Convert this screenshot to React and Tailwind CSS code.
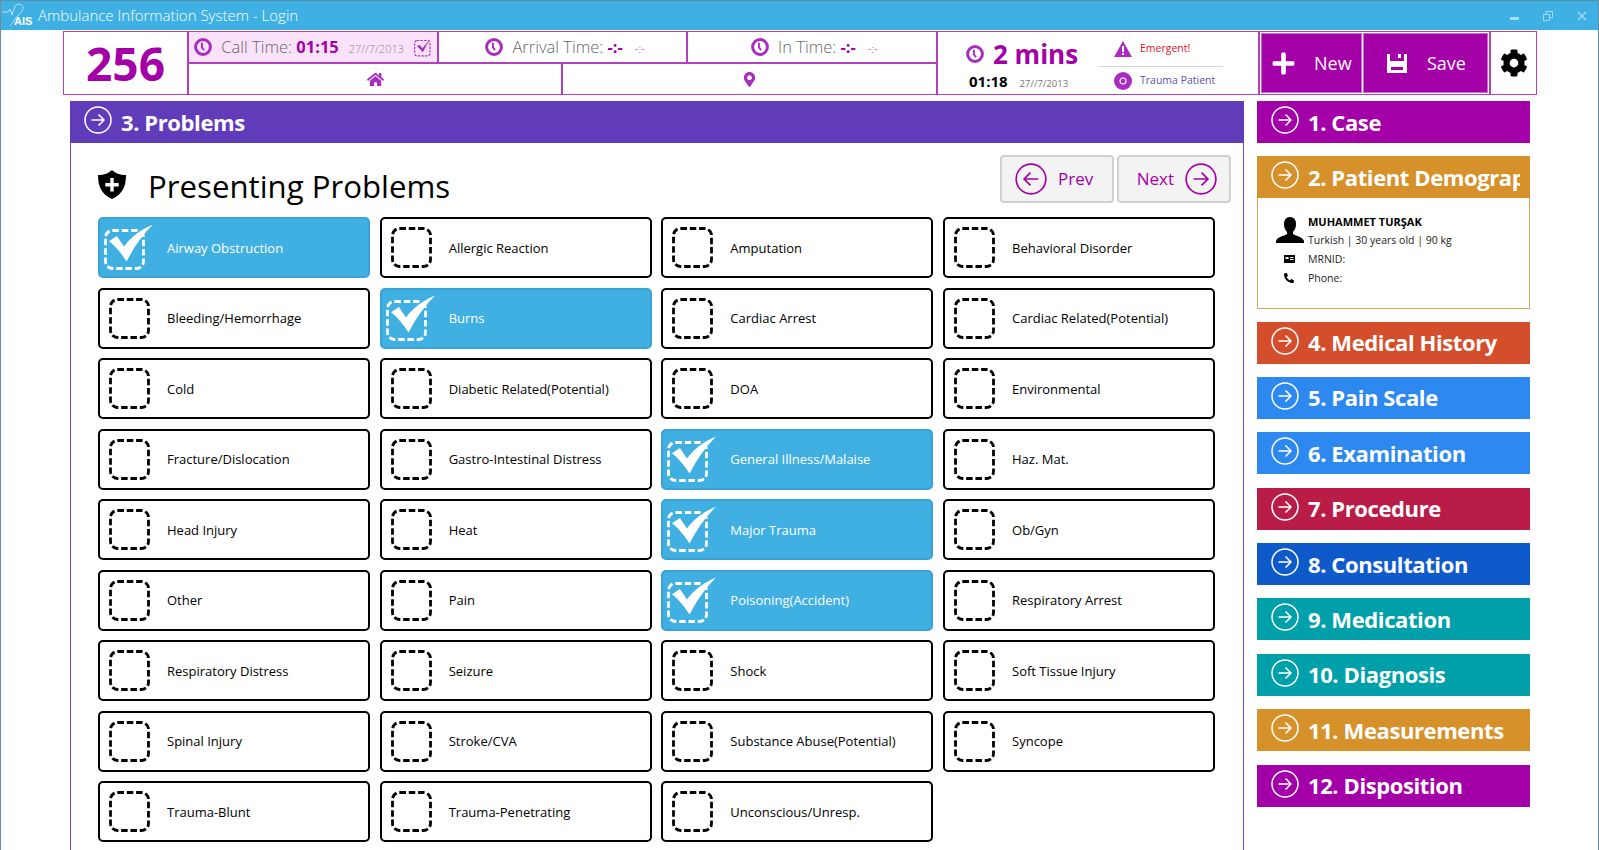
import { FaHome, FaMapMarkerAlt, FaCog, FaPlus, FaPhone } from "react-icons/fa";

const problems = [
    ["Airway Obstruction", true], ["Allergic Reaction"], ["Amputation"], ["Behavioral Disorder"],
    ["Bleeding/Hemorrhage"], ["Burns", true], ["Cardiac Arrest"], ["Cardiac Related(Potential)"],
    ["Cold"], ["Diabetic Related(Potential)"], ["DOA"], ["Environmental"],
    ["Fracture/Dislocation"], ["Gastro-Intestinal Distress"], ["General Illness/Malaise", true], ["Haz. Mat."],
    ["Head Injury"], ["Heat"], ["Major Trauma", true], ["Ob/Gyn"],
    ["Other"], ["Pain"], ["Poisoning(Accident)", true], ["Respiratory Arrest"],
    ["Respiratory Distress"], ["Seizure"], ["Shock"], ["Soft Tissue Injury"],
    ["Spinal Injury"], ["Stroke/CVA"], ["Substance Abuse(Potential)"], ["Syncope"],
    ["Trauma-Blunt"], ["Trauma-Penetrating"], ["Unconscious/Unresp."],
];

const sections = [
    { label: "4. Medical History", color: "bg-[#d54e2b]" },
    { label: "5. Pain Scale", color: "bg-[#2d89ef]" },
    { label: "6. Examination", color: "bg-[#2d89ef]" },
    { label: "7. Procedure", color: "bg-[#b91d47]" },
    { label: "8. Consultation", color: "bg-[#0f5acb]" },
    { label: "9. Medication", color: "bg-[#00a0ab]" },
    { label: "10. Diagnosis", color: "bg-[#00a0ab]" },
    { label: "11. Measurements", color: "bg-[#d6912b]" },
    { label: "12. Disposition", color: "bg-[#a300a8]" },
];

function ArrowCircle({ size = 28, dir = "right", width = 1.5 }) {
    return (
        <svg width={size} height={size} viewBox="0 0 28 28" fill="none" stroke="currentColor" strokeWidth={width} className="shrink-0">
            <circle cx="14" cy="14" r="13" />
            {dir === "right"
                ? <path d="M7.5 14h12.5M14.5 8.5 20 14l-5.500 5.500" />
                : <path d="M20.500 14H8M13.500 8.500 8 14l5.500 5.500" />}
        </svg>
    );
}

function Clock({ size = 18 }) {
    return (
        <svg width={size} height={size} viewBox="0 0 17 17" fill="none" stroke="#a92cc0" className="shrink-0">
            <circle cx="8.500" cy="8.500" r="7" strokeWidth="2.800" />
            <path d="M7.500 4.500v4.500l2 2.500" strokeWidth="1.800" />
        </svg>
    );
}

function CheckBox({ checked }) {
    const color = checked ? "#ffffff" : "#000000";
    return (
        <div className={`relative shrink-0 w-[41px] h-[41px] ${checked ? "-ml-[5px] mr-[22px] mt-[4px]" : "mr-[17px]"}`}>
            <svg width="41" height="41" viewBox="0 0 41 41" fill="none">
                <rect x="1.500" y="1.500" width="38" height="38" rx="7" stroke={color} strokeWidth="2.800" strokeDasharray="6.500 2.800" />
            </svg>
            {checked && (
                <svg width="44" height="38" viewBox="0 0 50 42" className="absolute -top-[5px] left-[5px]">
                    <path d="M0 19 9 13 17 25C25 14 36 6 50 0 38 12 28 26 20 42 14 33 8 25 0 19Z" fill="#ffffff" />
                </svg>
            )}
        </div>
    );
}

function ProblemCell({ label, checked }) {
    return (
        <div className={`h-[61px] rounded-[5px] border-2 flex items-center pl-[9px] text-[13px] ${checked ? "bg-[#40afe2] border-[#3aa3d6] text-white" : "bg-white border-black text-black"}`}>
            <CheckBox checked={checked} />
            <span className="pt-[2px]">{label}</span>
        </div>
    );
}

function SectionBar({ label, color }) {
    return (
        <div className={`h-[42px] flex items-center text-white pl-[14px] gap-[9px] pr-[10px] ${color}`}>
            <span className="-mt-[4px]"><ArrowCircle /></span>
            <span className="flex-1 min-w-0 overflow-hidden text-[22px] tracking-[-0.4px] font-bold whitespace-nowrap">{label}</span>
        </div>
    );
}

function TimeCell({ label, time, date, bg = "", w, check }) {
    return (
        <div className={`flex items-center justify-center gap-[9px] h-full ${w} ${bg} ${check ? "pl-[2px]" : "pl-[5px]"}`}>
            <Clock />
            <span className="text-[16.500px] font-light text-[#666666] whitespace-nowrap">
                {label} <b className="font-bold text-[#a300a8] text-[16.500px]">{time}</b>
                <span className={`text-[11px] ${check ? "ml-[10px] text-[#888888]" : "ml-[12px] text-[#a300a8]"}`}>{date}</span>
            </span>
            {check && (
                <svg width="21" height="20" viewBox="0 0 17 17" fill="none">
                    <rect x="1" y="3" width="13" height="13" rx="2" stroke="#a92cc0" strokeWidth="1" strokeDasharray="2 1" />
                    <path d="M3 8l2-1.500 2.500 3L15 1c-3 4-5 8-7 12-1.500-2-3-3.500-5-5Z" fill="#a92cc0" />
                </svg>
            )}
        </div>
    );
}

export default function App() {
    return (
        <div className="w-[1599px] h-[850px] overflow-hidden bg-white border-x border-[#6f8b9c] flex flex-col" style={{ fontFamily: '"Open Sans", "Noto Sans", sans-serif' }}>
            {/* ================= TITLE BAR ================= */}
            <div className="h-[30px] shrink-0 bg-[#3fb0e3] border-t border-[#5a8fa8] flex items-center text-white">
                <div className="relative w-[37px] h-[29px] shrink-0">
                    <svg width="30" height="28" viewBox="0 0 30 28" fill="none" stroke="#d6eefa" strokeWidth="0.800" className="absolute left-0 top-0">
                        <path d="M1 11h6l2-3 2 6 3-9c3-3 8-2 8 2 0 4-6 8-8 11-1 2-3 5-5 7" />
                    </svg>
                    <span className="absolute left-[13px] top-[15px] text-[11px] font-bold leading-none" style={{ fontFamily: '"Liberation Sans", sans-serif' }}>AIS</span>
                </div>
                <span className="text-[15px] font-light">Ambulance Information System - Login</span>
                <div className="ml-auto flex items-center text-[#a9dcf4] pr-[11px] gap-[24px]">
                    <span className="w-[9px] h-[3px] bg-current mt-[6px]" />
                    <svg width="10" height="10" viewBox="0 0 10 10" fill="none" stroke="currentColor"><path d="M.5 3.500h6v6h-6zM3 3V.500h6.500v6H7" /></svg>
                    <svg width="10" height="10" viewBox="0 0 10 10" fill="none" stroke="currentColor" strokeWidth="1.300"><path d="M1 1l8 8M9 1 1 9" /></svg>
                </div>
            </div>

            {/* ================= HEADER ================= */}
            <div className="ml-[62px] mt-[1px] w-[1474px] h-[64px] shrink-0 border border-[#b23fbd] flex">
                <div className="w-[125px] shrink-0 flex items-center justify-center text-[46px] font-bold text-[#a300a8] border-r-2 border-[#b23fbd]">256</div>

                <div className="w-[749px] shrink-0 flex flex-col border-r-2 border-[#b23fbd]">
                    <div className="h-[30px] flex border-b-2 border-[#b23fbd] box-content">
                        <TimeCell label="Call Time:" time="01:15" date="27//7/2013" bg="bg-[#fae2fb]" w="w-[251px] border-r-2 border-[#b23fbd]" check />
                        <TimeCell label="Arrival Time:" time="-:-" date="-:-" w="w-[249px] border-r-2 border-[#b23fbd]" />
                        <TimeCell label="In Time:" time="-:-" date="-:-" w="w-[249px]" />
                    </div>
                    <div className="flex-1 flex text-[#a92cc0]">
                        <div className="w-[374px] flex items-center justify-center border-r-2 border-[#b23fbd] text-[17px]"><FaHome /></div>
                        <div className="flex-1 flex items-center justify-center text-[15px]"><FaMapMarkerAlt /></div>
                    </div>
                </div>

                <div className="w-[322px] shrink-0 flex pl-[28px] border-r-2 border-[#b23fbd]">
                    <div className="w-[146px] shrink-0 flex flex-col pt-[4px]">
                        <div className="flex items-center gap-[9px] text-[#a300a8] text-[26px] font-bold leading-[36px]">
                            <Clock size={18} />
                            <span>2 mins</span>
                        </div>
                        <div className="flex items-baseline pl-[3px]">
                            <span className="text-[15px] font-bold text-black leading-[18px]">01:18</span>
                            <span className="text-[9.500px] text-[#777777] ml-[12px]">27//7/2013</span>
                        </div>
                    </div>
                    <div className="w-[125px] ml-[-14px] flex flex-col text-[10.500px]">
                        <div className="h-[35px] flex items-center gap-[8px] pl-[16px] border-b border-[#d8d8d8] text-[#e0102a]">
                            <svg width="18" height="16" viewBox="0 0 18 16" className="shrink-0">
                                <path d="M9 0 18 16H0Z" fill="#a92cc0" />
                                <path d="M8 5h2v6H8zM8 12h2v2H8z" fill="#ffffff" />
                            </svg>
                            <span>Emergent!</span>
                        </div>
                        <div className="flex-1 flex items-center gap-[8px] pl-[16px] text-[#6a4cb0]">
                            <svg width="18" height="18" viewBox="0 0 18 18" className="shrink-0">
                                <circle cx="9" cy="9" r="9" fill="#a92cc0" />
                                <circle cx="9" cy="9" r="3" fill="none" stroke="#ffffff" strokeWidth="1.200" />
                            </svg>
                            <span className="whitespace-nowrap">Trauma Patient</span>
                        </div>
                    </div>
                </div>

                <div className="flex p-[1px] gap-[1px] shrink-0 border-r-2 border-[#b23fbd]">
                    <div className="w-[101px] bg-[#a300a8] border border-[#c46ccb] text-white flex items-center pl-[9px] gap-[18px]">
                        <FaPlus size={25} />
                        <span className="text-[18px]">New</span>
                    </div>
                    <div className="w-[125px] bg-[#a300a8] border border-[#c46ccb] text-white flex items-center pl-[23px] gap-[20px]">
                        <svg width="20" height="20" viewBox="0 0 20 20" fill="#ffffff" className="shrink-0">
                            <path fillRule="evenodd" d="M0 1h3v7h14V1h3v19H0ZM4 14v3h12v-3ZM11 1h3v4h-3Z" />
                        </svg>
                        <span className="text-[18px]">Save</span>
                    </div>
                </div>

                <div className="flex-1 flex items-center justify-center text-black"><FaCog size={28} /></div>
            </div>

            {/* ================= BODY ================= */}
            <div className="flex flex-1 min-h-0 mt-[6px] pl-[69px]">
                <div className="w-[1174px] shrink-0 border-x border-[#6a48b8] flex flex-col -mr-px">
                    <div className="-mx-px">
                        <SectionBar label="3. Problems" color="bg-[#603cba]" />
                    </div>

                    <div className="flex items-start justify-between pl-[27px] pr-[12px] pt-[12px] h-[74px]">
                        <div className="flex items-center gap-[22px] mt-[13px]">
                            <svg width="28" height="29" viewBox="0 0 28 29" className="-mt-[3px]">
                                <path d="M14 0c3 3 8 5 14 5 0 11-3 19-14 24C3 24 0 16 0 5c6 0 11-2 14-5Z" fill="#000000" />
                                <path d="M12.300 8h3.400v5h5v3.400h-5v5h-3.400v-5h-5V13h5Z" fill="#ffffff" />
                            </svg>
                            <h1 className="text-[31.200px] leading-[36px] text-black">Presenting Problems</h1>
                        </div>
                        <div className="flex gap-[3px] text-[#a300a8]">
                            <button className="w-[114px] h-[48px] bg-[#f3f3f3] border-2 border-[#d0d0d0] rounded-[4px] flex items-center pl-[13px] gap-[11px] text-[17px]">
                                <ArrowCircle size={32} dir="left" /> Prev
                            </button>
                            <button className="w-[114px] h-[48px] bg-[#f3f3f3] border-2 border-[#d0d0d0] rounded-[4px] flex items-center justify-end pr-[12px] gap-[11px] text-[17px]">
                                Next <ArrowCircle size={32} />
                            </button>
                        </div>
                    </div>

                    <div className="grid grid-cols-4 gap-x-[9.700px] gap-y-[9.500px] pl-[27px] w-[1144px]">
                        {problems.map(([label, checked]) => (
                            <ProblemCell key={label} label={label} checked={checked} />
                        ))}
                    </div>
                </div>

                {/* ================= SECTIONS ================= */}
                <div className="w-[273px] ml-[14px] shrink-0 flex flex-col">
                    <SectionBar label="1. Case" color="bg-[#a300a8]" />

                    <div className="mt-[13px] border-b border-x border-[#d6a35a]">
                        <div className="-mx-px">
                            <SectionBar label="2. Patient Demographics" color="bg-[#d6912b]" />
                        </div>
                        <div className="h-[110px] text-[10.500px] text-[#222222] pl-[18px] pt-[15px]">
                            <div className="flex">
                                <svg width="28" height="26" viewBox="0 0 28 26" className="mt-[4px] shrink-0">
                                    <path d="M14 0c4 0 6 3 6 7 0 3-1 6-3 8v2c3 2 10 3 11 7v2H0v-2c1-4 8-5 11-7v-2c-2-2-3-5-3-8 0-4 2-7 6-7Z" fill="#000000" />
                                </svg>
                                <div className="ml-[4px] leading-[18px] whitespace-nowrap">
                                    <div className="font-bold text-[11px] text-black">MUHAMMET TURŞAK</div>
                                    <div>Turkish | 30 years old | 90 kg</div>
                                </div>
                            </div>
                            <div className="flex items-center leading-[18px] mt-px">
                                <svg width="11" height="8" viewBox="0 0 11 8" className="ml-[8px] mr-[13px] shrink-0">
                                    <path fillRule="evenodd" d="M0 0h11v8H0ZM1.500 2v2h3V2ZM6 2v1h3.500V2ZM6 4v1h3.500V4Z" fill="#000000" />
                                </svg>
                                MRNID:
                            </div>
                            <div className="flex items-center leading-[18px] mt-px">
                                <FaPhone size={10} className="ml-[8px] mr-[14px] shrink-0 scale-x-[-1] text-black" />
                                Phone:
                            </div>
                        </div>
                    </div>

                    <div className="mt-[12.500px] flex flex-col gap-[13.400px]">
                        {sections.map((s) => (
                            <SectionBar key={s.label} label={s.label} color={s.color} />
                        ))}
                    </div>
                </div>
            </div>
        </div>
    );
}
